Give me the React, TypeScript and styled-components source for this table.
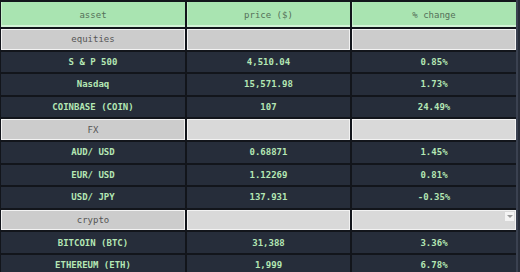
import React from "react";
import styled, { createGlobalStyle } from "styled-components";

const GlobalStyle = createGlobalStyle`
  html, body {
    margin: 0;
    background: #272d39;
  }
`;

const Sheet = styled.div`
  width: 520px;
  height: 272px;
  overflow: hidden;
  background: #272d39;
  font-family: "DejaVu Sans Mono", "Liberation Mono", monospace;
  font-size: 9px;
`;

const Grid = styled.div`
  display: grid;
  grid-template-columns: 184px 163px 164px;
  grid-template-rows: 25px;
  grid-auto-rows: 20.6px;
  column-gap: 2px;
  row-gap: 2px;
  width: 515px;
  padding: 2px 0 0 1px;
  background: #12151b;
  border-right: 2px solid #3a4150;
`;

const HeaderCell = styled.div`
  display: flex;
  align-items: center;
  justify-content: center;
  background: #a9e4b1;
  color: #557059;
  box-shadow: inset 0 -2px 0 #d2f2d6, inset 1px 0 0 #c4efc9;
`;

const GroupCell = styled.div<{ $light?: boolean }>`
  position: relative;
  display: flex;
  align-items: center;
  justify-content: center;
  background: ${(p) => (p.$light ? "#d9d9d9" : "#cccccc")};
  color: #555555;
  box-shadow: inset 0 0 0 1px #f2f2f2;
`;

const DataCell = styled.div`
  display: flex;
  align-items: center;
  justify-content: center;
  background: #262d3a;
  color: #b4e7b4;
  font-weight: bold;
`;

const Dropdown = styled.span`
  position: absolute;
  right: 2px;
  top: 2px;
  width: 9px;
  height: 9px;
  background: #f4f4f4;
  display: flex;
  align-items: center;
  justify-content: center;
`;

const Arrow = styled.span`
  width: 0;
  height: 0;
  border-left: 3px solid transparent;
  border-right: 3px solid transparent;
  border-top: 3px solid #9a9a9a;
`;

type Row = [string, string, string];

const groups: { name: string; light: boolean; dropdown?: boolean; rows: Row[] }[] = [
  {
    name: "equities",
    light: false,
    rows: [
      ["S & P 500", "4,510.04", "0.85%"],
      ["Nasdaq", "15,571.98", "1.73%"],
      ["COINBASE (COIN)", "107", "24.49%"],
    ],
  },
  {
    name: "FX",
    light: true,
    rows: [
      ["AUD/ USD", "0.68871", "1.45%"],
      ["EUR/ USD", "1.12269", "0.81%"],
      ["USD/ JPY", "137.931", "-0.35%"],
    ],
  },
  {
    name: "crypto",
    light: true,
    dropdown: true,
    rows: [
      ["BITCOIN (BTC)", "31,388", "3.36%"],
      ["ETHEREUM (ETH)", "1,999", "6.78%"],
    ],
  },
];

export default function App() {
  return (
    <>
      <GlobalStyle />
      <Sheet>
        <Grid>
          <HeaderCell>asset</HeaderCell>
          <HeaderCell>price ($)</HeaderCell>
          <HeaderCell>% change</HeaderCell>
          {groups.map((g) => (
            <React.Fragment key={g.name}>
              <GroupCell>{g.name}</GroupCell>
              <GroupCell $light={g.light} />
              <GroupCell $light={g.light}>
                {g.dropdown && (
                  <Dropdown>
                    <Arrow />
                  </Dropdown>
                )}
              </GroupCell>
              {g.rows.map((r) => (
                <React.Fragment key={r[0]}>
                  <DataCell>{r[0]}</DataCell>
                  <DataCell>{r[1]}</DataCell>
                  <DataCell>{r[2]}</DataCell>
                </React.Fragment>
              ))}
            </React.Fragment>
          ))}
        </Grid>
      </Sheet>
    </>
  );
}
